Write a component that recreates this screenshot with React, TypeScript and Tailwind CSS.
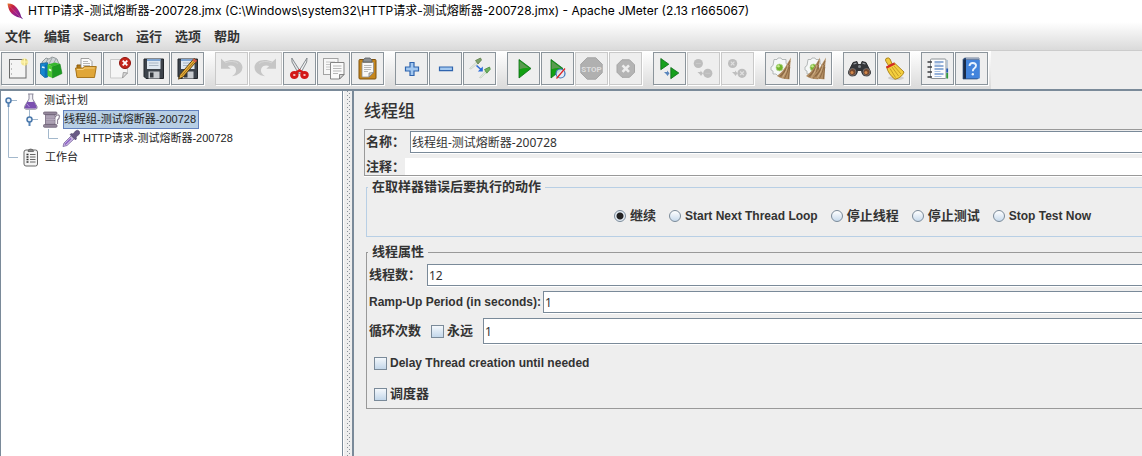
import { useState, type ReactNode } from "react";

const ui = "font-['Liberation_Sans','Noto_Sans_CJK_SC',sans-serif]";
const noto = "font-['Noto_Sans','Noto_Sans_CJK_SC',sans-serif]";
const caption = "font-['Inter','Noto_Sans_CJK_SC',sans-serif]";

function Feather() {
  return (
    <svg width="17" height="17" viewBox="0 0 17 17" aria-hidden="true">
      <defs>
        <linearGradient id="feather" x1="0" y1="0" x2="1" y2="1">
          <stop offset="0" stopColor="#e8862c" />
          <stop offset=".25" stopColor="#c8203c" />
          <stop offset=".55" stopColor="#a0208c" />
          <stop offset="1" stopColor="#5a1e86" />
        </linearGradient>
      </defs>
      <path d="M.5.5C3.500 0 7 1.500 9.500 4.500c2.500 3 4 6 4.600 9l2 2.800-2.800-1.500C9 14 5 11.500 3 8.500 1.500 6 .8 3 .5.5z" fill="url(#feather)" />
      <path d="M2 2.500l11.500 12" stroke="#d0508c" strokeWidth=".7" />
    </svg>
  );
}

const Flop = () => (
  <>
    <path d="M6 6h19.500v19.500H8L6 23.500z" fill="#3d434b" stroke="#23272c" />
    <rect x="9" y="6" width="13.500" height="10" fill="#dfe8f1" />
    <path d="M9 7h13.500" stroke="#5d8cc4" strokeWidth="1.500" />
    <path d="M11 10h9.500M11 12.500h9.500" stroke="#a9b6c4" />
    <rect x="10.500" y="18.500" width="11" height="7" fill="#c9ccd0" />
    <rect x="12" y="19.500" width="3.500" height="5" fill="#34383e" />
  </>
);

const Play = ({ x }: { x: number }) => (
  <>
    <path d={`M${x} 6.500l12 9-12 9.500z`} fill="#12a012" stroke="#0a6b14" strokeWidth=".8" />
    <path d={`M${x + 0.6} 8l9.500 7.200q-5-.5-9.500 1z`} fill="#5a9a50" />
  </>
);

const Gear = () => (
  <>
    <path d="M8 6.500h3l1-1.500h3l1 1.500h4v4l1.500 1v5L20 18v3h-4l-1.500 1.500h-3L10 21H7v-3l-2-1v-3l2-1.500z" fill="#f6f8f8" stroke="#a4aaaa" strokeWidth=".8" />
    <circle cx="13.500" cy="14.500" r="3.500" fill="#72b52c" stroke="#b9d896" strokeWidth=".8" />
    <circle cx="12.500" cy="13.300" r="1.300" fill="#c3e88b" />
  </>
);

const Straw = () => (
  <>
    <path d="M25 4.500q-1 8-1.500 21.700-7 .3-12.500-3.200 6.500-5 10-12z" fill="#b28d62" />
    <path d="M24 8q-3 9-9.500 16M23.500 12q-2 8-5 13.500M23.800 14q-1 7-1.500 12M21.500 13q-4 7-8 10.500" stroke="#7d5a36" strokeWidth=".7" fill="none" />
    <path d="M22 12q-2 8-5.500 12.500" stroke="#dcc09a" strokeWidth=".7" fill="none" />
  </>
);

const Undo = () => (
  <>
    <path d="M5 5.500v10.300h9.700L11.800 13q6.200-1.500 8 2.700 1.400 4-3.800 7.600 10-1.800 10.500-8.600C26.500 7.500 17 5 8.500 8.800z" fill="#c6c6c6" />
    <path d="M9 9.800q8-3 13 .7" stroke="#d6d6d6" fill="none" />
  </>
);

const oct = "M11.200 4.800h8.600l6.400 6.400v8.600l-6.400 6.400h-8.600l-6.400-6.400v-8.600z";

const icons: Record<string, ReactNode> = {
  New: (
    <>
      <rect x="7.500" y="6.500" width="16.500" height="18.500" fill="#f4f4f4" stroke="#6a6a6a" />
      <path d="M9 11h1M9 16h1M9 21h1" stroke="#888" />
      <circle cx="22.500" cy="9" r="3.500" fill="#f3e27a" opacity=".8" />
      <path d="M22.500 5v8M18.500 9h8" stroke="#fff6b0" strokeWidth="1.200" />
    </>
  ),
  Templates: (
    <>
      <path d="M6 9l4-4 3 1 3-2 3 1 2 1 2 5-1 4H7z" fill="#cfd4d6" stroke="#7f8789" strokeWidth=".8" />
      <path d="M9 11l3-5M13 11l3-6M17 11l3-5" stroke="#8d9698" strokeWidth=".8" />
      <path d="M4.500 10.500l7-.8V24l-3 .3-4-3.500z" fill="#1687d0" stroke="#0c5f9c" strokeWidth=".8" />
      <path d="M6 14l3 .8" stroke="#e2f3ff" strokeWidth="1.500" />
      <path d="M8.700 12l3.300-1v13l-3.300.7z" fill="#0d6fb4" />
      <path d="M11.500 11.500l5 2V25l-5-2z" fill="#4ecb35" />
      <path d="M16.500 13.500L24 11l2 9.500L16.500 25z" fill="#1c9b22" stroke="#128018" strokeWidth=".6" />
      <path d="M11.500 11.500L19 9.500l5 1.500-7.500 2.500z" fill="#36b82e" />
      <path d="M12.800 15.500l2.500 1v2l-2.500-1z" fill="#e9ffe4" />
    </>
  ),
  Open: (
    <>
      <path d="M7 12h5l2 2h10v9H7z" fill="#b67a16" stroke="#8a5a0d" />
      <path d="M11 5.500h8l3 3V17H11z" fill="#fafafa" stroke="#8b8b8b" strokeWidth=".8" />
      <path d="M13 8.500h5M13 10.500h7M13 12.500h7" stroke="#a5a5a5" strokeWidth=".8" />
      <path d="M5.500 15h7l2-1.500h11.800L24.500 24.500H7z" fill="#e0a638" stroke="#a26d12" strokeWidth=".9" />
      <path d="M7 16.500h6l2-1.500h9.500" stroke="#f5cf80" fill="none" />
    </>
  ),
  Close: (
    <>
      <path d="M6.500 6.500h17V20l-5 5h-12z" fill="#f5f5f5" stroke="#c9c9c9" />
      <path d="M23.500 20l-5 5 .8-5.500z" fill="#dcdcdc" stroke="#8e8e8e" strokeWidth=".8" />
      <circle cx="21" cy="10" r="5.500" fill="#c5261c" stroke="#8f120c" />
      <path d="M18.700 7.700l4.600 4.600M23.300 7.700l-4.600 4.600" stroke="#fff" strokeWidth="1.800" />
    </>
  ),
  Save: <Flop />,
  "Save as": (
    <>
      <Flop />
      <path d="M22 5.500l3 2.200L11 24l-4.500 2.200L8 21.700z" fill="#eab03a" stroke="#4c3510" strokeWidth=".9" />
      <path d="M23.500 7L9.500 23" stroke="#8c5f14" strokeWidth=".8" />
      <path d="M22 5.500l3 2.200-1.500 1.800-3-2.200z" fill="#d2584c" />
    </>
  ),
  Undo: <Undo />,
  Redo: (
    <g transform="translate(31 0) scale(-1 1)">
      <Undo />
    </g>
  ),
  Cut: (
    <>
      <path d="M7.800 5L17 19.500l-2.500 1L8 9z" fill="#e4e6e8" stroke="#7b8084" strokeWidth=".9" />
      <path d="M23 5l-9 14.500 2.500 1L22.700 9z" fill="#f2f3f4" stroke="#7b8084" strokeWidth=".9" />
      <ellipse cx="10.300" cy="22" rx="2.800" ry="2.500" fill="#f3c9c9" stroke="#d31818" strokeWidth="3" />
      <ellipse cx="20.500" cy="22" rx="2.800" ry="2.500" fill="#f3c9c9" stroke="#d31818" strokeWidth="3" />
      <path d="M12 19.500l3.500-2 3.500 2" stroke="#d31818" strokeWidth="2.400" fill="none" />
    </>
  ),
  Copy: (
    <>
      <rect x="5.500" y="5.500" width="14.500" height="16" fill="#f7f7f7" stroke="#a3a3a3" />
      <path d="M8 9h9M8 11.500h5M8 14h4M8 16.500h4" stroke="#c6c6c6" />
      <path d="M12.500 9.500H26V21.500l-4.500 4.500h-9z" fill="#fafafa" stroke="#858585" />
      <path d="M15 13h8.500M15 15.500h8.500M15 18h8.500M15 20.500h5" stroke="#b7b7b7" />
      <path d="M26 21.500l-4.500 4.500v-4.500z" fill="#d5d5d5" stroke="#6d6d6d" strokeWidth=".8" />
    </>
  ),
  Paste: (
    <>
      <rect x="7" y="6.500" width="17" height="19.500" rx="1" fill="#c6861c" stroke="#80520d" />
      <path d="M10 9.500h11.500v10l-4.500 4.500H10z" fill="#f8f8f8" stroke="#8f8f8f" strokeWidth=".8" />
      <path d="M12 12.500h7.500M12 14.500h7.500M12 16.500h7M12 18.500h4" stroke="#b0b0b0" strokeWidth=".9" />
      <path d="M21.500 19.500L17 24v-4z" fill="#cfcfcf" stroke="#777" strokeWidth=".7" />
      <path d="M11 9V7q1-.5 2-2h5q1 1.500 2 2v2z" fill="#8c9094" stroke="#565a5e" strokeWidth=".8" />
    </>
  ),
  "Expand all": (
    <path d="M14 9.500h4v4.500h4.500v4H18v4.500h-4V18H9.500v-4H14z" fill="#a3c8f0" stroke="#2f64ae" strokeWidth="1.200" />
  ),
  "Collapse all": <path d="M9.500 14h13v3.600h-13z" fill="#a3c8f0" stroke="#2f64ae" strokeWidth="1.200" />,
  Toggle: (
    <>
      <path d="M5.500 15.500l7-6.500 1.500 1.500-7 5.500z" fill="#e3e9df" stroke="#c4ccc0" strokeWidth=".7" />
      <path d="M11.500 7.500l5-2.500 1 2-3.500 4z" fill="#7fa06b" stroke="#56783f" strokeWidth=".7" />
      <path d="M15.500 24.500l6-6.500 1.500 1-6 6z" fill="#dfeedd" stroke="#c4ccc0" strokeWidth=".7" />
      <path d="M20.500 16.500l5-2.500.8 2.200-3.500 4z" fill="#6fb45f" stroke="#3e8434" strokeWidth=".7" />
      <path d="M12.500 12.500l5 4.500" stroke="#2b6bd8" strokeWidth="1.600" />
      <path d="M18.800 13.500v5h-5z" fill="#2b6bd8" />
    </>
  ),
  Start: <Play x={11} />,
  "Start no pauses": (
    <>
      <Play x={9} />
      <circle cx="18.500" cy="20.500" r="4.500" fill="#dfe9f7" fillOpacity=".85" stroke="#3b72b8" strokeWidth="1.200" />
      <path d="M14.500 25.500l8.500-10" stroke="#d22" strokeWidth="1.200" />
    </>
  ),
  Stop: (
    <>
      <path d={oct} fill="#b0b0b0" stroke="#a6a6a6" />
      <text x="15.500" y="18.500" textAnchor="middle" fontSize="8" fontWeight="700" fill="#dedede" fontFamily="Roboto">STOP</text>
    </>
  ),
  Shutdown: (
    <>
      <path d="M12 6.800h7.500l5 5v7.500l-5 5H12l-5-5v-7.500z" fill="#b4b4b4" stroke="#a6a6a6" />
      <path d="M12.500 12.300l6.500 6.500M19 12.300l-6.500 6.500" stroke="#ededed" strokeWidth="2.600" />
    </>
  ),
  "Remote start": (
    <>
      <path d="M6.800 5.500l8 5.700-8 5.500z" fill="#17a01d" stroke="#0b6a16" strokeWidth=".8" />
      <path d="M16.800 14.500l8 5.500-8 5.700z" fill="#17a01d" stroke="#0b6a16" strokeWidth=".8" />
      <path d="M10 19h3v-1.500l2.500 2.800-2 2.700-1-1.500z" fill="#5a86bd" />
    </>
  ),
  "Remote stop": (
    <>
      <circle cx="10.300" cy="10.500" r="4.600" fill="#bdbdbd" />
      <circle cx="19.800" cy="20.300" r="4.600" fill="#bdbdbd" />
      <path d="M7.800 10.500h5M17.300 20.300h5" stroke="#c8c8c8" />
      <path d="M9.500 19h3v-1.500l2.500 2.800-2 2.700-1-1.500z" fill="#bfbfbf" />
    </>
  ),
  "Remote shutdown": (
    <>
      <circle cx="10.600" cy="10.500" r="4.600" fill="#bdbdbd" />
      <circle cx="20" cy="20.300" r="4.600" fill="#bdbdbd" />
      <path d="M8.800 8.700l3.600 3.600M12.400 8.700l-3.600 3.600M18.200 18.500l3.600 3.600M21.800 18.500l-3.600 3.600" stroke="#e0e0e0" strokeWidth="1.200" />
      <path d="M10 19h3v-1.500l2.500 2.800-2 2.700-1-1.500z" fill="#bfbfbf" />
    </>
  ),
  Clear: (
    <>
      <Gear />
      <Straw />
    </>
  ),
  "Clear all": (
    <>
      <Gear />
      <g transform="translate(-5 0)">
        <Straw />
      </g>
      <g transform="translate(1 0)">
        <Straw />
      </g>
    </>
  ),
  Search: (
    <>
      <path d="M9 9.500l4-1 1 3h3l1-3 4 1 4.500 9q.5 4-3.500 4.500-4 .5-5-3l-.5-2.500h-4L13 20q-1 3.500-5 3-4-.5-3.500-4.500z" fill="#34363a" stroke="#1b1c1e" strokeWidth=".8" />
      <circle cx="8.500" cy="19" r="3.500" fill="#76492f" stroke="#77797c" strokeWidth=".8" />
      <circle cx="22.500" cy="19" r="3.500" fill="#76492f" stroke="#77797c" strokeWidth=".8" />
      <circle cx="8" cy="19.500" r="1.500" fill="#d48a4c" />
      <circle cx="22" cy="19.500" r="1.500" fill="#d48a4c" />
      <path d="M9.500 11l3-.8M18.500 10.200l3 .8" stroke="#9a9da2" strokeWidth="1.200" />
      <circle cx="15.500" cy="13.500" r="1.500" fill="#85898e" />
    </>
  ),
  "Reset search": (
    <>
      <ellipse cx="18" cy="25" rx="8" ry="2" fill="#cfcfcf" />
      <path d="M8 5.500q2.500-1.500 4 .5l2 4.500-3.500 2-2.500-4q-1-1.500 0-3z" fill="#f0c93e" stroke="#a67c12" strokeWidth=".9" />
      <path d="M8.500 14l8-4 9.500 9q-2 5.500-9 7.300Q10.500 21.500 8.500 14z" fill="#f3cf3f" stroke="#a67c12" strokeWidth=".9" />
      <path d="M12 15.500l5.500 9M14 14l6.500 9M16 13l7 8" stroke="#b98e1d" strokeWidth=".8" />
      <path d="M8 13.500L16 9.500l1.200 2-8 4z" fill="#d42c22" />
    </>
  ),
  "Function helper": (
    <>
      <rect x="8.500" y="6" width="15.500" height="19.500" rx="1" fill="#fcfcfc" stroke="#8c9296" />
      <path d="M25.200 7v18.500" stroke="#b5c4d6" strokeWidth="1.500" />
      <path d="M25.200 20v5.500" stroke="#2f9a38" strokeWidth="1.800" />
      <path d="M25.200 15.500v4" stroke="#2459b0" strokeWidth="1.800" />
      <path d="M5.500 9h4.500M5.500 14h4.500M5.500 19h4.500M5.500 24h4.500" stroke="#3b3d40" strokeWidth="1.600" />
      <path d="M12.500 9h9M12.500 13h9M12.500 16h9M12.500 21h9" stroke="#2c64b4" strokeWidth="1.200" />
      <path d="M12.500 11h6M12.500 18.500h6M12.500 23.500h7" stroke="#a8c3e6" />
    </>
  ),
  Help: (
    <>
      <path d="M7 6.500L8.500 5H23v19.500L21.500 26H7z" fill="#2b4f86" stroke="#1f3c68" strokeWidth=".6" />
      <rect x="10" y="7" width="13.700" height="18.500" fill="#4384dc" />
      <path d="M7.500 6.500v19h2.500v-19z" fill="#1c2c47" />
      <path d="M10 5.800h13" stroke="#a9b4c4" strokeWidth="1.400" />
      <path d="M13.500 13q.2-3 3.300-3 3.200 0 3.200 2.600 0 1.600-1.600 2.700-1.600 1-1.600 2.900" stroke="#e8f3ff" strokeWidth="1.900" fill="none" />
      <circle cx="16.800" cy="21.300" r="1.200" fill="#e8f3ff" />
    </>
  ),
};

const groups: string[][] = [
  ["New", "Templates", "Open", "Close", "Save", "Save as"],
  ["Undo", "Redo", "Cut", "Copy", "Paste"],
  ["Expand all", "Collapse all", "Toggle"],
  ["Start", "Start no pauses", "Stop", "Shutdown"],
  ["Remote start", "Remote stop", "Remote shutdown"],
  ["Clear", "Clear all"],
  ["Search", "Reset search"],
  ["Function helper", "Help"],
];
const disabled = new Set(["Undo", "Redo", "Stop", "Shutdown", "Remote stop", "Remote shutdown"]);

function Toolbar() {
  return (
    <div className="flex h-[38px] bg-[#eee]" role="toolbar" aria-label="Toolbar">
      <div className="flex gap-[11px] bg-linear-to-b from-white to-[#dadada] py-px pr-[3px] pl-px">
        {groups.map((g) => (
          <div key={g[0]} className="flex gap-px">
            {g.map((name) => (
              <button
                key={name}
                type="button"
                aria-label={name}
                disabled={disabled.has(name)}
                className="size-[33px] border border-[#8b949b] bg-[#eee] shadow-[1px_1px_0_#fff] disabled:border-[#c9c9c9]"
              >
                <svg width="31" height="31" viewBox="0 0 31 31" fill="none" aria-hidden="true">
                  {icons[name]}
                </svg>
              </button>
            ))}
          </div>
        ))}
      </div>
    </div>
  );
}

function Knob({ x }: { x: number }) {
  return (
    <>
      <path d={`M${x + 3} 9.500h6`} stroke="#a3b8cc" />
      <path d={`M${x + 0.5} 11v5`} stroke="#5b87b8" strokeWidth="2" />
      <circle cx={x + 0.5} cy="9.500" r="2.500" fill="#e8f1fa" stroke="#4a78ab" strokeWidth="1.500" />
    </>
  );
}

const gutter = "h-[19px] shrink-0";

function Tree() {
  return (
    <ul role="tree" aria-label="Test plan" className={`${ui} text-[11px] leading-[19px] text-[#222]`}>
      <li role="treeitem" className="flex">
        <svg className={`${gutter} w-[22px]`} viewBox="0 0 22 19" fill="none">
          <path d="M7.500 12v7" stroke="#a3b8cc" />
          <Knob x={7} />
        </svg>
        <svg width="18" height="19" viewBox="0 0 18 19" fill="none">
          <path d="M5 3h5.500M6 3v5L1.500 15.500q-.8 2.500 1.500 2.700h9.500q2.300-.2 1.500-2.700L9.700 8V3" fill="#f0eff5" stroke="#8d8a9c" />
          <path d="M4.500 10.500q3 1.200 6.500 0l2.600 5q.6 1.900-1.300 2.100H3.200q-1.800-.2-1.200-2z" fill="#7a4fb0" />
          <path d="M4 13l2.500 3" stroke="#b193dc" />
        </svg>
        <span className="pl-[3px]">测试计划</span>
      </li>
      <li role="treeitem" aria-selected="true" className="flex">
        <svg className={`${gutter} w-[41px]`} viewBox="0 0 41 19" fill="none">
          <path d="M7.500 0v19M28.500 0v7" stroke="#a3b8cc" />
          <Knob x={28} />
        </svg>
        <svg width="19" height="19" viewBox="0 0 19 19" fill="none">
          <path d="M13 7q3-3.500 4.500-1 0 2.500-2 4v4" stroke="#8f8496" strokeWidth="1.200" />
          <rect x="3.500" y="4" width="9.500" height="11" fill="#a397ab" stroke="#77697f" strokeWidth=".8" />
          <path d="M4 7h9M4 9.500h9M4 12h9" stroke="#b5aabc" />
          <rect x="1.500" y="2" width="13.500" height="2.500" rx="1" fill="#94879b" stroke="#6f6377" strokeWidth=".8" />
          <rect x="1.500" y="14.500" width="13.500" height="2.800" rx="1" fill="#94879b" stroke="#6f6377" strokeWidth=".8" />
        </svg>
        <span className="ml-0.5 border border-[#6382bf] bg-[#b8cfe5] pr-0.5 leading-[17px]">线程组-测试熔断器-200728</span>
      </li>
      <li role="treeitem" className="flex">
        <svg className={`${gutter} w-[61px]`} viewBox="0 0 61 19" fill="none">
          <path d="M7.500 0v19M47.500 0v9.500H57" stroke="#a3b8cc" />
        </svg>
        <svg width="18" height="19" viewBox="0 0 18 19" fill="none">
          <path d="M1 17.500l1-3.500 7.500-7.500 3 3L5 16.500z" fill="#cbb9e2" stroke="#8570a8" strokeWidth=".9" />
          <path d="M3 15.500l6-6" stroke="#8a5fc4" strokeWidth="1.500" />
          <path d="M8 5.500l1.500-1 1.500.5 2.500-3q2-1.500 3.500 0t0 3.500l-3 2.500.5 1.500-1 1.500z" fill="#6a5a86" stroke="#4e4366" strokeWidth=".6" />
        </svg>
        <span className="pl-[3px]">HTTP请求-测试熔断器-200728</span>
      </li>
      <li role="treeitem" className="flex">
        <svg className={`${gutter} w-[22px]`} viewBox="0 0 22 19" fill="none">
          <path d="M7.500 0v9.500H17" stroke="#a3b8cc" />
        </svg>
        <svg width="18" height="19" viewBox="0 0 18 19" fill="none">
          <rect x="1" y="2" width="13.500" height="16" rx="2" fill="#f4f4f4" stroke="#666" />
          <path d="M5 3.500q0-2.500 2.700-2.500t2.800 2.500z" fill="#888" stroke="#555" strokeWidth=".7" />
          <path d="M3.500 6.500h2M3.500 9h2M3.500 11.500h2M3.500 14h2" stroke="#333" strokeWidth="1.300" />
          <path d="M7 6.500h5.500M7 9h5.500M7 11.500h5.500M7 14h5.500" stroke="#666" strokeWidth="1.200" />
        </svg>
        <span className="pl-1">工作台</span>
      </li>
    </ul>
  );
}

const field = `${noto} h-[22px] min-w-0 flex-1 border-y border-l border-[#7a8a99] bg-white px-px text-[12px] font-normal text-[#333] shadow-[0_1px_0_#fff] outline-none`;
const check =
  "size-[13px] appearance-none border border-[#7a8a99] bg-linear-to-b from-[#f4f8fc] to-[#c3d7ea] checked:from-[#7a8a99] checked:to-[#7a8a99]";
const radio =
  "size-3 appearance-none rounded-full border border-[#7a8a99] bg-linear-to-b from-white to-[#c8daec] checked:bg-[radial-gradient(circle,#222_0_3px,#e4edf6_4px)]";
const cjk = "text-[13px]";

const actions = [
  { label: "继续", cls: "text-[13px]" },
  { label: "Start Next Thread Loop", cls: "text-[12px]" },
  { label: "停止线程", cls: "text-[13px]" },
  { label: "停止测试", cls: "text-[13px]" },
  { label: "Stop Test Now", cls: "text-[12px]" },
];

function ThreadGroup() {
  const [action, setAction] = useState("继续");
  return (
    <main className={`${ui} min-w-0 flex-1 border-l-2 border-[#7a8a99] bg-[#eee] pt-[11px] text-[12px] font-bold text-[#333]`}>
      <h1 className="pl-2.5 text-[17px] leading-5 font-medium">线程组</h1>
      <div className="mt-[7px] ml-2.5 border-y border-l border-[#999] pt-px shadow-[0_1px_0_#fff]">
        <div className="flex items-center">
          <label htmlFor="name" className={`${cjk} w-[45px] pl-px leading-[22px] whitespace-nowrap`}>名称：</label>
          <input id="name" defaultValue="线程组-测试熔断器-200728" className={field} />
        </div>
        <div className="mt-[5px] flex h-[17px] items-center">
          <label htmlFor="comment" className={`${cjk} w-10 pl-px leading-[17px] whitespace-nowrap`}>注释：</label>
          <input id="comment" className="h-full min-w-0 flex-1 bg-white px-1 text-[12px] font-normal outline-none" />
        </div>
      </div>

      <fieldset className="mt-[3px] ml-3 border-y border-l border-[#b8cfe5] pt-[11px] pb-2.5">
        <legend className={`${cjk} ml-px px-1 leading-4`}>在取样器错误后要执行的动作</legend>
        <div className="flex h-5 items-center gap-[13px] pl-[247px]">
          {actions.map((a) => (
            <label key={a.label} className={`${a.cls} flex items-center gap-1 leading-5 whitespace-nowrap`}>
              <input
                type="radio"
                name="action"
                className={radio}
                checked={action === a.label}
                onChange={() => setAction(a.label)}
              />
              {a.label}
            </label>
          ))}
        </div>
      </fieldset>

      <fieldset className="mt-[7px] ml-3 border-y border-l border-[#999] pt-1 pb-1 pl-0.5">
        <legend className={`${cjk} ml-[-1px] px-1 leading-4`}>线程属性</legend>
        <div className="flex items-center">
          <label htmlFor="threads" className={`${cjk} w-[58px] leading-[22px] whitespace-nowrap`}>线程数：</label>
          <input id="threads" defaultValue="12" className={field} />
        </div>
        <div className="mt-[5px] flex items-center">
          <label htmlFor="ramp" className="w-[174px] leading-[22px] whitespace-nowrap">Ramp-Up Period (in seconds):</label>
          <input id="ramp" defaultValue="1" className={field} />
        </div>
        <div className="mt-[5px] flex h-[26px] items-center">
          <label htmlFor="loops" className={`${cjk} w-[62px] whitespace-nowrap`}>循环次数</label>
          <label className={`${cjk} flex w-[52px] items-center gap-[3px] whitespace-nowrap`}>
            <input type="checkbox" className={check} />
            永远
          </label>
          <input id="loops" defaultValue="1" className={`${field} min-h-full`} />
        </div>
        <label className="mt-[9px] flex h-5 w-fit items-center gap-[3px] pl-[5px]">
          <input type="checkbox" className={check} />
          Delay Thread creation until needed
        </label>
        <label className={`${cjk} mt-[11px] flex h-5 w-fit items-center gap-[3px] pl-[5px]`}>
          <input type="checkbox" className={check} />
          调度器
        </label>
      </fieldset>
    </main>
  );
}

const menus = [
  { label: "文件", cls: "text-[13px]" },
  { label: "编辑", cls: "text-[13px]" },
  { label: "Search", cls: "text-[12px]" },
  { label: "运行", cls: "text-[13px]" },
  { label: "选项", cls: "text-[13px]" },
  { label: "帮助", cls: "text-[13px]" },
];

export default function App() {
  return (
    <div className="flex min-h-screen flex-col overflow-hidden bg-[#eee]">
      <header className="flex h-[22px] items-center bg-white pl-[7px]">
        <Feather />
        <span className={`${caption} pl-1 text-[12px] whitespace-nowrap text-black`}>
          HTTP请求-测试熔断器-200728.jmx (C:\Windows\system32\HTTP请求-测试熔断器-200728.jmx) - Apache JMeter (2.13 r1665067)
        </span>
      </header>
      <nav className={`${ui} flex h-[29px] items-center gap-[13px] border-b border-[#ccc] bg-linear-to-b from-white to-[#dadada] pt-px pl-[5px] font-bold text-[#333]`}>
        {menus.map((m) => (
          <button key={m.label} type="button" className={`${m.cls} leading-5 whitespace-nowrap`}>
            {m.label}
          </button>
        ))}
      </nav>
      <Toolbar />
      <div className="flex flex-1 border-t-2 border-[#7a8a99]">
        <aside className="w-[343px] shrink-0 border-x border-[#7a8a99] bg-white">
          <Tree />
        </aside>
        <div className="w-[9px] shrink-0 border-l border-white bg-[#eee]">
          <div className="ml-[3px] h-full w-1 bg-[conic-gradient(from_270deg_at_1px_1px,#8a929a_25%,transparent_0),conic-gradient(from_270deg_at_1px_1px,#8a929a_25%,transparent_0)] bg-size-[4px_4px] bg-position-[0_0,2px_2px]" />
        </div>
        <ThreadGroup />
      </div>
    </div>
  );
}
